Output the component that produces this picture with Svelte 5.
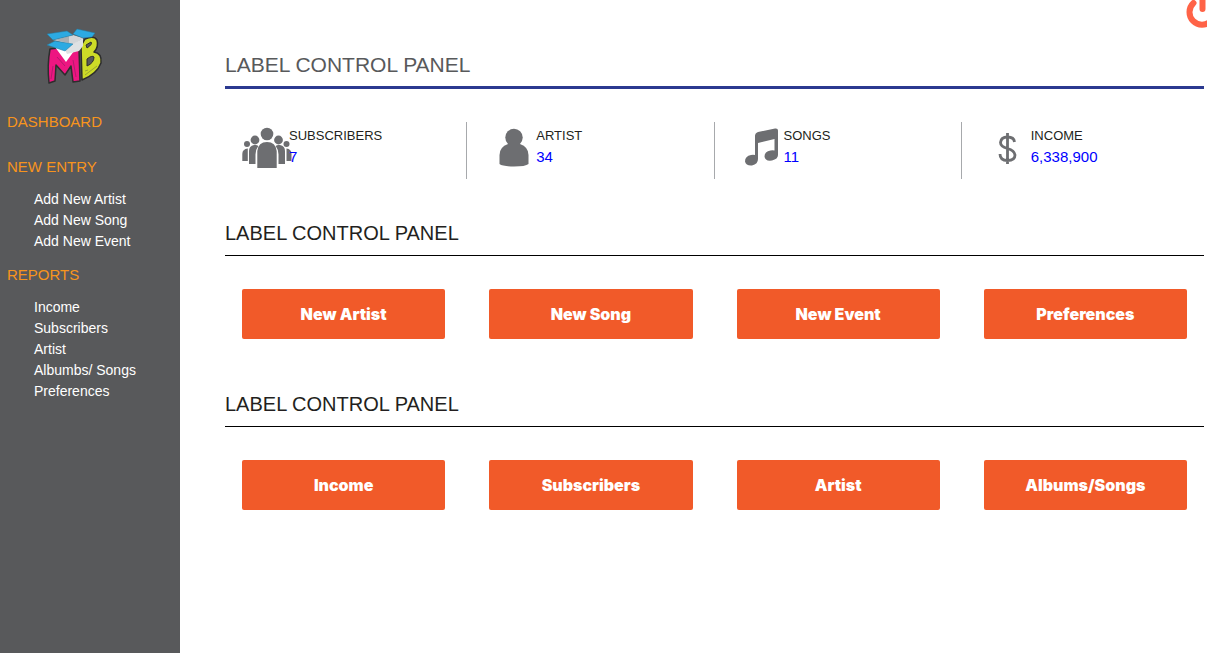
<script>
  const entries = ['Add New Artist', 'Add New Song', 'Add New Event'];
  const reports = ['Income', 'Subscribers', 'Artist', 'Albumbs/ Songs', 'Preferences'];
  const stats = [
    { icon: 'group', label: 'SUBSCRIBERS', value: '7' },
    { icon: 'person', label: 'ARTIST', value: '34' },
    { icon: 'music', label: 'SONGS', value: '11' },
    { icon: 'dollar', label: 'INCOME', value: '6,338,900' }
  ];
  const panels = [
    ['New Artist', 'New Song', 'New Event', 'Preferences'],
    ['Income', 'Subscribers', 'Artist', 'Albums/Songs']
  ];
</script>

<div class="page">
  <aside>
    <a class="logo" href="#home" aria-label="MB">
      <svg width="60" height="60" viewBox="0 0 60 60">
        <path d="M5 22 13 21 21 33 28 22 34 22 35 54 28 55 26 39 20 48 11 38 10 54 4 56Q2 38 5 22Z" fill="#ed1681" stroke="#2d2d2d" stroke-width="1.500" stroke-linejoin="round" />
        <path d="M36 19 40 12Q49 8 52 13 54 20 49 25 57 26 56 36 52 47 37 53Z" fill="#cddb27" stroke="#2d2d2d" stroke-width="1.500" stroke-linejoin="round" />
        <path d="m41 18 5-3q2 2-4 6zm1 14q5-4 7-2 0 6-7 9z" fill="#58595b" stroke="#2d2d2d" />
        <path d="m6 52 2-13m4-9 8 9m8-6 3 17" stroke="#b51a6d" fill="none" />
        <path d="m40 48 12-9m-12 5 3-1" stroke="#9aa72f" fill="none" />
        <path d="M10 20 20 23 28 17 34 20 29 24 21 35Z" fill="#fff" />
        <path d="m8 13 20-5 10 3-10 7Z" fill="#d2d5d8" />
        <path d="m10 13 14-4v7Z" fill="#a9afb3" />
        <path d="m28 17 10-6v8l-4 5-12 3-2-4Z" fill="#dfe1e3" />
        <path d="m2 7 20-3 6 4-20 5ZM28 7l4-5 18 4-3 4-9 1ZM2 18l8-4 18 3-8 7Z" fill="#2caae2" stroke="#247ba0" stroke-width=".5" stroke-linejoin="round" />
      </svg>
    </a>
    <nav>
      <a class="section" href="#dashboard">DASHBOARD</a>
      <h2 class="section entry">NEW ENTRY</h2>
      <ul>{#each entries as item}<li><a href="#entry">{item}</a></li>{/each}</ul>
      <h2 class="section">REPORTS</h2>
      <ul>{#each reports as item}<li><a href="#report">{item}</a></li>{/each}</ul>
    </nav>
  </aside>

  <main>
    <h1>LABEL CONTROL PANEL</h1>
    <div class="stats">
      {#each stats as stat}
        <div class="stat">
          <div class="icon {stat.icon}">
            {#if stat.icon === 'group'}
              <svg width="50" height="42" viewBox="0 0 50 42" fill="#6d6e71">
                <circle cx="25" cy="7" r="6.300" /><circle cx="13" cy="13" r="4.400" /><circle cx="36.500" cy="13" r="4.400" /><circle cx="5" cy="17" r="3" /><circle cx="44.500" cy="17" r="3" />
                <path d="M15.300 41V24q1-9 9.700-9t9.700 9v17ZM7 37V24q0-5 5-6 3-.5 4.300 1-3 4-2.800 9v9ZM43 37V24q0-5-5-6-3-.5-4.300 1 3 4 2.800 9v9ZM.3 34v-7q0-5 5.500-5.500v12.500ZM49.500 34v-7q0-5-5-5.500v12.500Z" />
              </svg>
            {:else if stat.icon === 'person'}
              <svg width="30" height="42" viewBox="0 0 30 42" fill="#6d6e71">
                <circle cx="15" cy="10.500" r="8.700" /><path d="M9 17h12q8.500 3 8.500 11v9q-3 2.500-14.500 2.500T.5 37v-9Q.5 20 9 17Z" />
              </svg>
            {:else if stat.icon === 'music'}
              <svg width="34" height="42" viewBox="0 0 34 42" fill="#6d6e71">
                <path d="M10 10q0-3 3-4L30 2.500q3-.5 3 2V29q0 4-6 5.500-7 1-7.500-4 0-5 6-6 2-.5 4 0V13L13 17v16q0 5-6 6.500-6 .5-7-4Q0 30 6 29q2-.5 4 0Z" />
              </svg>
            {:else}
              <svg width="20" height="42" viewBox="0 0 20 42">
                <path d="M9.500 3v31M16.500 12Q16 7 9.500 7T2.500 12.500q0 4 7 6T17 25q0 5.500-7.500 5.500Q2 30.500 2 24" fill="none" stroke="#6d6e71" stroke-width="2.800" />
              </svg>
            {/if}
          </div>
          <div class="detail"><span>{stat.label}</span><a href="#stat">{stat.value}</a></div>
        </div>
      {/each}
    </div>
    {#each panels as panel}
      <section>
        <h2>LABEL CONTROL PANEL</h2>
        <div class="buttons">
          {#each panel as label}<button type="button">{label}</button>{/each}
        </div>
      </section>
    {/each}
  </main>
  <button class="power" type="button" aria-label="Log out">
    <svg width="36" height="36" viewBox="0 0 36 36" fill="none" stroke="#ff6347" stroke-width="6" stroke-linecap="round"><path d="M9.500 10A12.500 12.500 0 1 0 26.500 10M18.500 2v14" /></svg>
  </button>
</div>

<style>
  :global(body) { margin: 0; background: #fff; }
  .page {
    position: relative;
    display: flex;
    min-height: 100vh;
    overflow: hidden;
    font-family: "Liberation Sans", Arial, sans-serif;
  }
  a { text-decoration: none; }
  h1, h2, ul { margin: 0; padding: 0; font-weight: 400; }
  aside { box-sizing: border-box; flex: 0 0 180px; padding-top: 27px; background: #58595b; }
  .logo { display: block; height: 60px; padding-left: 45px; }
  nav { padding: 25px 7px; }
  .section { display: block; color: #f7941d; font-size: 15px; line-height: 20px; }
  .entry { margin-top: 25px; }
  ul { list-style: none; padding: 12px 0 13px 27px; }
  li { height: 21px; font-size: 14px; line-height: 21px; }
  li a { color: #fff; }
  main { flex: 1; min-width: 0; padding: 53px 3px 0 45px; }
  h1 { border-bottom: 3px solid #2b3990; padding-bottom: 9px; color: #58595b; font-size: 21px; line-height: 24px; }
  .stats { display: grid; grid-template-columns: repeat(4, 1fr); margin: 33px -5px 42px; }
  .stat { display: flex; box-sizing: border-box; height: 57px; border-right: 1px solid #a7a9ac; }
  .stat:last-child { border: 0; }
  .icon { display: flex; flex: none; width: 69px; box-sizing: border-box; padding-top: 5px; }
  .group { padding-left: 22px; }
  .person { padding-left: 32px; }
  .music { padding-left: 30px; padding-top: 4px; }
  .dollar { padding-left: 36px; padding-top: 8px; }
  svg { display: block; flex: none; }
  .detail { display: flex; flex-direction: column; padding-top: 3px; font-size: 13px; line-height: 21px; color: #231f20; }
  .detail a { font-size: 15px; color: #00f; }
  section { margin-bottom: 53px; }
  section h2 { padding-bottom: 10px; border-bottom: 1px solid #000; color: #231f20; font-size: 20px; line-height: 24px; }
  .buttons { display: grid; grid-template-columns: repeat(4, 1fr); gap: 44px; padding: 33px 17px 0; }
  .buttons button {
    height: 50px;
    padding: 0;
    border: 0;
    border-radius: 2px;
    background: #f15a29;
    color: #fff;
    font-family: Inter, "Liberation Sans", sans-serif;
    font-size: 16px;
    font-weight: 900;
  }
  .power { position: absolute; top: -7px; right: -13px; padding: 0; border: 0; background: none; }
</style>
